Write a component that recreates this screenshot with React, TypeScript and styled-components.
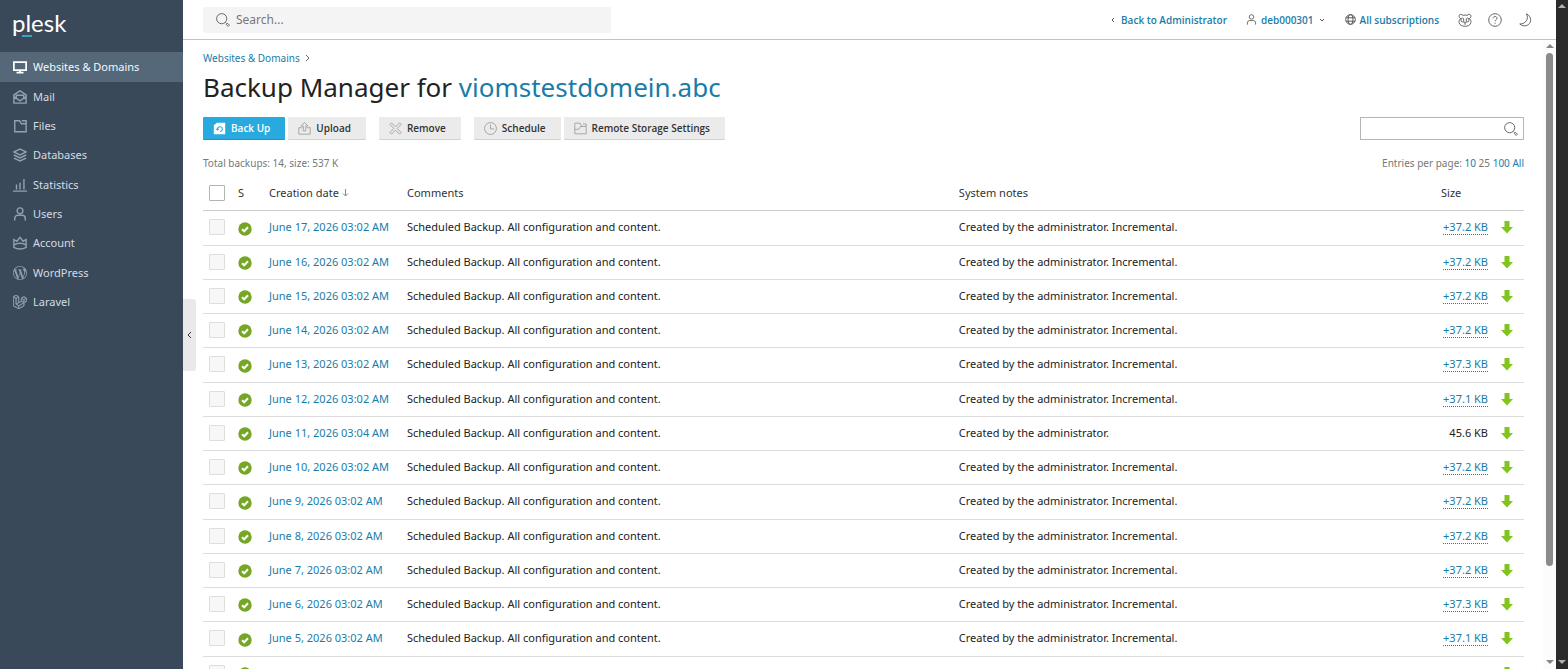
import React from "react";
import styled, { createGlobalStyle, css } from "styled-components";
import { SiLaravel, SiWordpress } from "react-icons/si";

const GlobalStyle = createGlobalStyle`
  *, *::before, *::after { box-sizing: border-box; }
  body {
    margin: 0;
    background: #fff;
    color: #222;
    font-family: "Noto Sans", "Open Sans", sans-serif;
    font-size: 11px;
    line-height: 18px;
  }
  a { color: #1a7ca8; text-decoration: none; }
  button, input { font: inherit; }
`;

const Page = styled.div`
  display: flex;
  height: 100vh;
  overflow: hidden;
`;

const Sidebar = styled.aside`
  position: relative;
  flex: 0 0 183px;
  background: #3a495a;
`;

const Logo = styled.a`
  position: relative;
  display: block;
  height: 52px;
  padding: 8px 12px;
  color: #fff;
  font: 400 24px/30px Lato, sans-serif;

  &::after {
    content: "";
    position: absolute;
    left: 22px;
    top: 35px;
    width: 10px;
    height: 2px;
    background: #3f9fba;
  }
`;

const NavList = styled.ul`
  margin: 0;
  padding: 0;
  list-style: none;
`;

const NavItem = styled.li<{ $active?: boolean; $tall?: boolean }>`
  height: ${(p) => (p.$tall ? 30 : 29)}px;
  background: ${(p) => (p.$active ? "#54687a" : "transparent")};

  a {
    display: flex;
    align-items: center;
    gap: 6px;
    height: 100%;
    padding: 0 13px;
    color: ${(p) => (p.$active ? "#f4f8fa" : "#d3dce4")};
  }
  svg { color: ${(p) => (p.$active ? "#fff" : "#93a1af")}; }
`;

const Collapse = styled.button`
  position: absolute;
  left: 100%;
  top: calc(50% - 36px);
  display: flex;
  align-items: center;
  justify-content: center;
  width: 13px;
  height: 72px;
  padding: 0;
  border: 0;
  border-radius: 0 3px 3px 0;
  background: #e9e9e9;
  color: #333;
`;

const Main = styled.div`
  flex: 1;
  min-width: 0;
  display: flex;
  flex-direction: column;
`;

const TopBar = styled.header`
  flex: none;
  display: flex;
  align-items: center;
  justify-content: space-between;
  height: 40px;
  padding: 0 24px 0 20px;
  border-bottom: 1px solid #bfc3c5;
`;

const GlobalSearch = styled.label`
  display: flex;
  align-items: center;
  gap: 6px;
  width: 408px;
  height: 26px;
  padding: 0 13px;
  border-radius: 2px;
  background: #f4f4f4;
  color: #555;

  input {
    flex: 1;
    min-width: 0;
    padding: 0;
    border: 0;
    outline: 0;
    background: none;
    font-size: 12px;
  }
  input::placeholder { color: #777; opacity: 1; }
`;

const TopLinks = styled.nav`
  display: flex;
  align-items: center;
  color: #555;
  font-family: "Open Sans", sans-serif;
  font-size: 10px;
  font-weight: 600;
`;

const TopLink = styled.a`
  display: flex;
  align-items: center;
  gap: 4px;
  margin-right: 19px;
  svg { color: #555; }
`;

const IconButton = styled.button`
  display: flex;
  margin-right: 16px;
  padding: 0;
  border: 0;
  background: none;
  color: #555;
  &:last-child { margin-right: 0; }
`;

const Body = styled.div`
  flex: 1;
  min-height: 0;
  display: flex;
`;

const Content = styled.main`
  flex: 1;
  min-width: 0;
  padding: 9px 19px 0 20px;
  overflow: hidden;
`;

const Breadcrumb = styled.nav`
  display: flex;
  align-items: center;
  gap: 4px;
  height: 18px;
  font-size: 10px;
  svg { color: #666; }
`;

const Title = styled.h1`
  margin: 2px 0 12px;
  font-size: 26px;
  font-weight: 400;
  line-height: 36px;
`;

const Toolbar = styled.div`
  display: flex;
  align-items: center;
  justify-content: space-between;
`;

const ButtonRow = styled.div`
  display: flex;
  gap: 13px;
`;

const ButtonGroup = styled.div`
  display: flex;
  gap: 3px;
`;

const ToolButton = styled.button<{ $primary?: boolean }>`
  display: flex;
  align-items: center;
  gap: 5px;
  height: 23px;
  padding: 0 15px 0 10px;
  border: 0;
  border-bottom: 1px solid #d2d2d2;
  border-radius: 1px;
  background: #ebebeb;
  color: #333;
  font-family: "Open Sans", sans-serif;
  font-size: 10px;
  font-weight: 600;
  white-space: nowrap;
  svg { color: #999; }

  ${(p) =>
    p.$primary &&
    css`
      border-color: #1f93c6;
      background: #28aade;
      color: #fff;
      svg { color: #fff; }
    `}
`;

const ListSearch = styled.label`
  display: flex;
  align-items: center;
  width: 164px;
  height: 23px;
  padding: 0 5px;
  border: 1px solid #b5b5b5;
  color: #555;

  input {
    flex: 1;
    min-width: 0;
    padding: 0;
    border: 0;
    outline: 0;
    background: none;
    font-size: 12px;
  }
`;

const Summary = styled.div`
  display: flex;
  justify-content: space-between;
  margin-top: 14px;
  color: #777;
  font-size: 10px;
`;

const Table = styled.table`
  width: 100%;
  margin-top: 5px;
  border-collapse: separate;
  border-spacing: 0;
  table-layout: fixed;

  th, td {
    height: 34px;
    padding: 0 7px 2px;
    border-bottom: 1px solid #dcdcdc;
    text-align: left;
    font-weight: 400;
    white-space: nowrap;
  }
  th:first-child, td:first-child { padding-left: 6px; }
  th { border-color: #cfcfcf; color: #333; }
  tbody tr:nth-child(4n + 1) td { height: 35px; }
`;

const Col = styled.col<{ $width?: number }>`
  width: ${(p) => (p.$width ? `${p.$width}px` : "auto")};
`;

const NotesCol = styled.col`
  width: 36.5%;
`;

const Check = styled.input`
  display: block;
  appearance: none;
  width: 16px;
  height: 16px;
  margin: 0;
  border: 1px solid #b3b3b3;
  border-radius: 1px;
  background: #fff;
  &:disabled { border-color: #dedede; background: #f7f7f7; }
`;

const SortLink = styled.a`
  display: flex;
  align-items: center;
  gap: 3px;
  color: #333;
  svg { color: #888; }
`;

const SizeCell = styled.td`
  && { padding-right: 0; text-align: right; }
`;

const SizeLink = styled.a`
  border-bottom: 1px dotted #1a7ca8;
`;

const Download = styled.a`
  display: block;
  width: 12px;
  margin-left: 6px;
  svg { display: block; }
`;

const Status = styled.span`
  display: block;
  padding-top: 3px;
  svg { display: block; }
`;

const ScrollTrack = styled.div<{ $dark?: boolean }>`
  flex: 0 0 ${(p) => (p.$dark ? 12 : 13)}px;
  display: flex;
  flex-direction: column;
  align-items: center;
  justify-content: space-between;
  padding: 4px 0 5px;
  background: ${(p) => (p.$dark ? "#2b2b2b" : "#fcfcfc")};
  color: ${(p) => (p.$dark ? "#b0b0b0" : "#858585")};
  svg { flex: none; }
`;

const ThumbLane = styled.div`
  flex: 1;
  width: 7px;
  padding: 5px 0 4px;
`;

const Thumb = styled.div`
  height: 85%;
  border-radius: 4px;
  background: #8b8b8b;
`;

type IconProps = { size?: number; children: React.ReactNode; stroke?: number };

const Icon = ({ size = 14, stroke = 1, children }: IconProps) => (
  <svg width={size} height={size} viewBox="0 0 16 16" fill="none" stroke="currentColor" strokeWidth={stroke} aria-hidden="true">
    {children}
  </svg>
);

const MagnifierIcon = ({ size = 14 }: { size?: number }) => (
  <Icon size={size}>
    <circle cx="6.5" cy="6.5" r="5.8" />
    <path d="M10.8 10.8l1.2 1.2M11.6 13l1.4-1.4 2.4 2.4-1.4 1.4z" />
  </Icon>
);

const UserIcon = ({ size, stroke }: { size?: number; stroke?: number }) => (
  <Icon size={size} stroke={stroke}>
    <circle cx="8" cy="4.3" r="3.3" />
    <path d="M2 15.5V13a3.5 3.5 0 0 1 3.5-3.5h5A3.5 3.5 0 0 1 14 13v2.5" />
  </Icon>
);

const Chevron = ({ d, size = 8 }: { d: string; size?: number }) => (
  <svg width={size} height={size} viewBox="0 0 8 8" fill="none" stroke="currentColor" aria-hidden="true">
    <path d={d} />
  </svg>
);

const Triangle = ({ down }: { down?: boolean }) => (
  <svg width="8" height="4" viewBox="0 0 8 4" fill="currentColor" aria-hidden="true">
    <path d={down ? "M0 0h8L4 4z" : "M0 4h8L4 0z"} />
  </svg>
);

const navItems: { label: string; icon: React.ReactNode }[] = [
  {
    label: "Websites & Domains",
    icon: (
      <Icon stroke={2}>
        <path d="M1 2.5h14v9H1zM4 14.5h8M8 11.5v3" />
      </Icon>
    ),
  },
  {
    label: "Mail",
    icon: (
      <Icon stroke={1.6}>
        <path d="M1 5.500L8 1l7 4.500V15H1zM1 7.500l7 5 7-5M3.800 9V6h8.400v3" />
      </Icon>
    ),
  },
  {
    label: "Files",
    icon: (
      <Icon stroke={1.6}>
        <path d="M2 2h5.500l2 3.500H15v9H2zM10 2h5v4.500" />
      </Icon>
    ),
  },
  {
    label: "Databases",
    icon: (
      <Icon stroke={1.7}>
        <path d="M8 1.200l7 3.300-7 3.300-7-3.300zM1 8l7 3.300L15 8M1 11.500l7 3.300 7-3.300" />
      </Icon>
    ),
  },
  {
    label: "Statistics",
    icon: (
      <Icon stroke={1.6}>
        <path d="M0 15h16M4 7.500V13M8 5.500V13M12.500 1v12" />
      </Icon>
    ),
  },
  { label: "Users", icon: <UserIcon stroke={1.6} /> },
  {
    label: "Account",
    icon: (
      <Icon stroke={1.6}>
        <path d="M1 4l3.500 2L8 1.500 11.500 6 15 4v9c-4 2.500-10 2.500-14 0zM1.500 10c4-2 9-2 13 0" />
      </Icon>
    ),
  },
  { label: "WordPress", icon: <SiWordpress size={14} /> },
  { label: "Laravel", icon: <SiLaravel size={14} stroke="currentColor" strokeWidth={1} /> },
];

const backups = [
  ["June 17, 2026 03:02 AM", "+37.2 KB"],
  ["June 16, 2026 03:02 AM", "+37.2 KB"],
  ["June 15, 2026 03:02 AM", "+37.2 KB"],
  ["June 14, 2026 03:02 AM", "+37.2 KB"],
  ["June 13, 2026 03:02 AM", "+37.3 KB"],
  ["June 12, 2026 03:02 AM", "+37.1 KB"],
  ["June 11, 2026 03:04 AM", "45.6 KB"],
  ["June 10, 2026 03:02 AM", "+37.2 KB"],
  ["June 9, 2026 03:02 AM", "+37.2 KB"],
  ["June 8, 2026 03:02 AM", "+37.2 KB"],
  ["June 7, 2026 03:02 AM", "+37.2 KB"],
  ["June 6, 2026 03:02 AM", "+37.3 KB"],
  ["June 5, 2026 03:02 AM", "+37.1 KB"],
  ["June 4, 2026 03:02 AM", "45.6 KB"],
];

const App = () => (
  <>
    <GlobalStyle />
    <Page>
      <Sidebar>
        <Logo href="#">plesk</Logo>
        <nav>
          <NavList>
            {navItems.map((item, i) => (
              <NavItem key={item.label} $active={i === 0} $tall={i % 3 === 0}>
                <a href="#">
                  {item.icon}
                  {item.label}
                </a>
              </NavItem>
            ))}
          </NavList>
        </nav>
        <Collapse aria-label="Collapse sidebar">
          <Chevron d="M5 1L2 4l3 3" />
        </Collapse>
      </Sidebar>

      <Main>
        <TopBar>
          <GlobalSearch>
            <MagnifierIcon />
            <input type="search" placeholder="Search..." aria-label="Search" />
          </GlobalSearch>
          <TopLinks>
            <TopLink href="#">
              <Chevron d="M5 2L3 4l2 2" />
              Back to Administrator
            </TopLink>
            <TopLink href="#">
              <UserIcon size={11} stroke={1.2} />
              deb000301
              <Chevron d="M2 3l2 2 2-2" />
            </TopLink>
            <TopLink href="#">
              <Icon size={11} stroke={1.4}>
                <circle cx="8" cy="8" r="7" />
                <ellipse cx="8" cy="8" rx="3.500" ry="7" />
                <path d="M1.500 5.500h13M1.500 10.500h13" />
              </Icon>
              All subscriptions
            </TopLink>
            <IconButton aria-label="Advisor">
              <Icon>
                <path d="M3 6.500C.5 5 .8 1.500 3 1.500c1.300 0 2 .5 2.500 1.200 1.500-.5 3.500-.5 5 0 .5-.7 1.200-1.200 2.500-1.200 2.200 0 2.500 3.500 0 5M3 6c-1.300 1.500-2 3.500-1.800 5C2 14 5 15.200 8 15.200s6-1.200 6.800-4.200c.2-1.500-.5-3.500-1.800-5M6.500 10.500h3L8 12zM8 12v1.500" />
                <ellipse cx="5" cy="8" rx="1.600" ry="2.200" />
                <ellipse cx="11" cy="8" rx="1.600" ry="2.200" />
              </Icon>
            </IconButton>
            <IconButton aria-label="Help">
              <Icon>
                <circle cx="8" cy="8" r="7.200" />
                <path d="M5.800 6.200c0-3 4.500-2.800 4.500-.2 0 1.700-2.200 1.700-2.200 3.500M8.100 11v1.300" />
              </Icon>
            </IconButton>
            <IconButton aria-label="Dark mode">
              <Icon>
                <path d="M9.500 1c3.500 5-.5 12-7.500 11.500C7 17 14 14 14.500 8.500 14.600 5 12.500 2 9.500 1z" />
              </Icon>
            </IconButton>
          </TopLinks>
        </TopBar>

        <Body>
          <Content>
            <Breadcrumb aria-label="Breadcrumb">
              <a href="#">Websites &amp; Domains</a>
              <Chevron d="M2 1l3 3-3 3" />
            </Breadcrumb>
            <Title>
              Backup Manager for <a href="#">viomstestdomein.abc</a>
            </Title>

            <Toolbar>
              <ButtonRow>
                <ButtonGroup>
                  <ToolButton $primary>
                    <svg width="13" height="13" viewBox="0 0 16 16" fill="currentColor" aria-hidden="true">
                      <path d="M1 4l4-3h10v14H1z" />
                      <path d="M4 8.500l1.500 1.500L7 8.500M5.500 9.500c-.5-4 5.500-5 6-1.200.2 2-1.200 3.200-3 3.200" fill="none" stroke="#28aade" strokeWidth="1.300" />
                    </svg>
                    Back Up
                  </ToolButton>
                  <ToolButton>
                    <Icon size={13}>
                      <path d="M5 7H1v8h14V7h-4M6.500 11V5H4l4-4.500L12 5H9.500v6z" />
                    </Icon>
                    Upload
                  </ToolButton>
                </ButtonGroup>
                <ToolButton>
                  <Icon size={13}>
                    <path d="M1 3l2-2 5 5 5-5 2 2-5 5 5 5-2 2-5-5-5 5-2-2 5-5z" />
                  </Icon>
                  Remove
                </ToolButton>
                <ButtonGroup>
                  <ToolButton>
                    <Icon size={13}>
                      <circle cx="8" cy="8" r="7.300" />
                      <path d="M8 3v5.500h4.500" />
                    </Icon>
                    Schedule
                  </ToolButton>
                  <ToolButton>
                    <Icon size={13}>
                      <path d="M1 1.500h6.500l2 4H15v9H1zM1 9h5l2-3.500h2M11 2.500h4v3" />
                    </Icon>
                    Remote Storage Settings
                  </ToolButton>
                </ButtonGroup>
              </ButtonRow>
              <ListSearch>
                <input type="text" aria-label="Search backups" />
                <MagnifierIcon />
              </ListSearch>
            </Toolbar>

            <Summary>
              <span>Total backups: 14, size: 537 K</span>
              <span>
                Entries per page: <a href="#">10</a> 25 <a href="#">100</a> <a href="#">All</a>
              </span>
            </Summary>

            <Table>
              <colgroup>
                <Col $width={28} />
                <Col $width={31} />
                <Col $width={138} />
                <Col />
                <NotesCol />
                <Col $width={54} />
                <Col $width={36} />
              </colgroup>
              <thead>
                <tr>
                  <th>
                    <Check type="checkbox" aria-label="Select all backups" />
                  </th>
                  <th>S</th>
                  <th>
                    <SortLink href="#">
                      Creation date
                      <svg width="7" height="9" viewBox="0 0 7 9" fill="none" stroke="currentColor" aria-hidden="true">
                        <path d="M3.500 1v7M1 5.500L3.500 8 6 5.500" />
                      </svg>
                    </SortLink>
                  </th>
                  <th>Comments</th>
                  <th>System notes</th>
                  <th>Size</th>
                  <th aria-label="Download" />
                </tr>
              </thead>
              <tbody>
                {backups.map(([date, size]) => {
                  const incremental = size.startsWith("+");
                  return (
                    <tr key={date}>
                      <td>
                        <Check type="checkbox" disabled aria-label={`Select ${date}`} />
                      </td>
                      <td>
                        <Status>
                          <svg width="14" height="14" viewBox="0 0 14 14" role="img" aria-label="Successful">
                            <circle cx="7" cy="7" r="6.700" fill="#76a626" />
                            <path d="M4 7.200l2.200 2.100L10 5.300" fill="none" stroke="#fff" strokeWidth="2" />
                          </svg>
                        </Status>
                      </td>
                      <td>
                        <a href="#">{date}</a>
                      </td>
                      <td>Scheduled Backup. All configuration and content.</td>
                      <td>Created by the administrator.{incremental ? " Incremental." : ""}</td>
                      <SizeCell>{incremental ? <SizeLink href="#">{size}</SizeLink> : size}</SizeCell>
                      <td>
                        <Download href="#" aria-label={`Download ${date}`}>
                          <svg width="12" height="14" viewBox="0 0 12 14" fill="#80c41c" aria-hidden="true">
                            <path d="M3.500 1h5v6H12l-6 6.500L0 7h3.500z" />
                          </svg>
                        </Download>
                      </td>
                    </tr>
                  );
                })}
              </tbody>
            </Table>
          </Content>
          <ScrollTrack aria-hidden="true">
            <Triangle />
            <ThumbLane>
              <Thumb />
            </ThumbLane>
            <Triangle down />
          </ScrollTrack>
        </Body>
      </Main>

      <ScrollTrack $dark aria-hidden="true">
        <Triangle />
        <Triangle down />
      </ScrollTrack>
    </Page>
  </>
);

export default App;
